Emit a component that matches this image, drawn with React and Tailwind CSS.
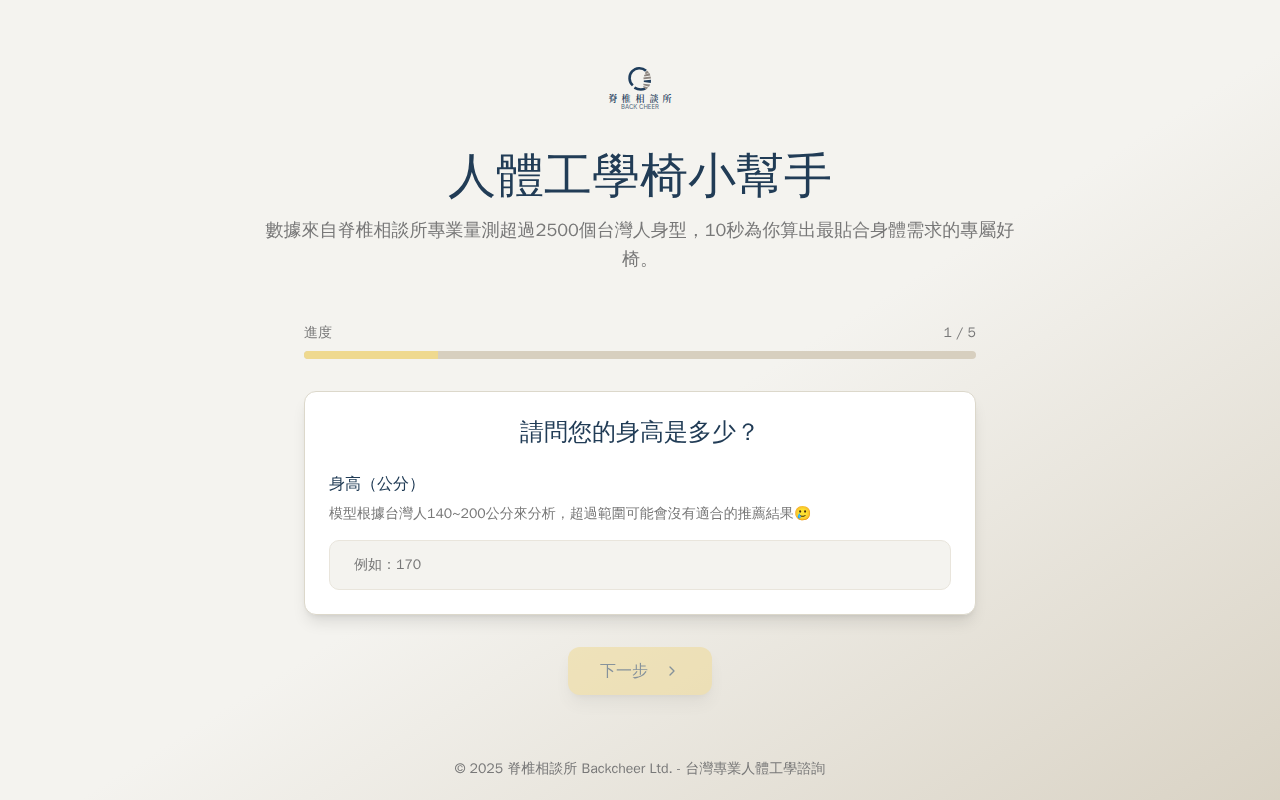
import React, { useState } from 'react';
import { ChevronRight } from 'lucide-react';

const TOTAL_STEPS = 5;

const Logo = () => (
  <svg viewBox="0 0 64 64" className="h-16 w-16" role="img" aria-label="脊椎相談所 Back Cheer">
    {/* Ring */}
    <path
      d="M38 14.8 A9.6 9.6 0 1 0 24.8 29.4"
      fill="none"
      stroke="#1f3d5c"
      strokeWidth="2.6"
    />
    <path d="M26.4 31.6 Q31.6 34.8 37.4 32.6" fill="none" stroke="#1f3d5c" strokeWidth="2.6" />
    {/* Vertebrae */}
    <g fill="#8d8680">
      <path d="M37 16.8 L39 14.4 L41 16.6 L37.6 18.2 Z" />
      <path d="M36 19 L41.4 17 L42.4 19.4 L36.4 20.6 Z" />
      <path d="M35.4 21.6 L42.6 20.4 L43 22.6 L35.6 23.2 Z" />
      <path d="M35.2 27.8 L42.2 28.6 L41 30.8 L35.6 29.2 Z" />
      <path d="M35.2 30 L40.2 31.6 L38.2 33.4 L35.6 31.4 Z" />
    </g>
    <path d="M35.8 24.4 L43 23.8 L42.8 27 L35.8 26 Z" fill="#1f3d5c" />
    <g
      className="font-['Noto_Serif_CJK_TC','Noto_Sans_CJK_TC',serif] font-semibold"
      fontSize="9"
      textAnchor="middle"
      fill="#1f3d5c"
    >
      <text x="5" y="46">脊</text>
      <text x="18" y="46">椎</text>
      <text x="32" y="46">相</text>
      <text x="46" y="46">談</text>
      <text x="59" y="46">所</text>
    </g>
    <text
      x="32"
      y="53"
      fontSize="6"
      textAnchor="middle"
      fill="#4f6479"
      className="font-['Inter',sans-serif]"
    >
      BACK CHEER
    </text>
  </svg>
);

const ProgressBar = ({ step, total }) => (
  <div>
    <div className="mb-2 flex items-center justify-between text-sm text-[#787878]">
      <span id="progress-label">進度</span>
      <span>{`${step} / ${total}`}</span>
    </div>
    <div
      role="progressbar"
      aria-labelledby="progress-label"
      aria-valuenow={step}
      aria-valuemin={0}
      aria-valuemax={total}
      className="h-2 w-full overflow-hidden rounded-full bg-[#d7cfbf]"
    >
      <div className="h-full bg-[#efd98f]" style={{ width: `${(step / total) * 100}%` }} />
    </div>
  </div>
);

export default function App() {
  const [step, setStep] = useState(1);
  const [height, setHeight] = useState('');

  return (
    <div className="min-h-screen bg-[linear-gradient(to_bottom_right,#f4f3ef_53%,#d7d0c1_104%)] px-4 pt-14 pb-5 font-['WenQuanYi_Zen_Hei','Noto_Sans_CJK_TC',sans-serif] text-[#213c56]">
      {/* Header */}
      <header className="mx-auto flex max-w-3xl flex-col items-center text-center">
        <Logo />
        <h1 className="mt-8 text-5xl leading-12">人體工學椅小幫手</h1>
        <p className="mt-4 text-lg leading-relaxed text-[#787878]">
          數據來自脊椎相談所專業量測超過2500個台灣人身型，10秒為你算出最貼合身體需求的專屬好椅。
        </p>
      </header>

      <main className="mx-auto mt-12 max-w-2xl">
        <ProgressBar step={step} total={TOTAL_STEPS} />

        {/* Question card */}
        <section className="mt-8 rounded-xl border border-[#dcd8cb] bg-white p-6 shadow-lg">
          <h2 className="text-center text-2xl">請問您的身高是多少？</h2>
          <div className="mt-6">
            <label htmlFor="height" className="block text-base">
              身高（公分）
            </label>
            <p id="height-hint" className="mt-2 text-sm text-[#787878]">
              模型根據台灣人140~200公分來分析，超過範圍可能會沒有適合的推薦結果🥲
            </p>
            <input
              id="height"
              type="text"
              inputMode="numeric"
              aria-describedby="height-hint"
              placeholder="例如：170"
              value={height}
              onChange={(e) => setHeight(e.target.value)}
              className="mt-4 block h-[50px] w-full rounded-[10px] border border-[#e9e5dc] bg-[#f4f3ef] px-6 text-sm outline-none placeholder:text-[#787878]"
            />
          </div>
        </section>

        <div className="mt-8 flex justify-center">
          <button
            type="button"
            disabled={!height}
            onClick={() => setStep((s) => Math.min(s + 1, TOTAL_STEPS))}
            className="flex h-12 items-center gap-4 rounded-xl bg-[#efd98f] px-8 text-base shadow-lg disabled:opacity-50"
          >
            下一步
            <ChevronRight className="h-4 w-4" />
          </button>
        </div>
      </main>

      <footer className="mt-16 text-center text-sm text-[#787878]">
        © 2025 脊椎相談所 Backcheer Ltd. - 台灣專業人體工學諮詢
      </footer>
    </div>
  );
}
